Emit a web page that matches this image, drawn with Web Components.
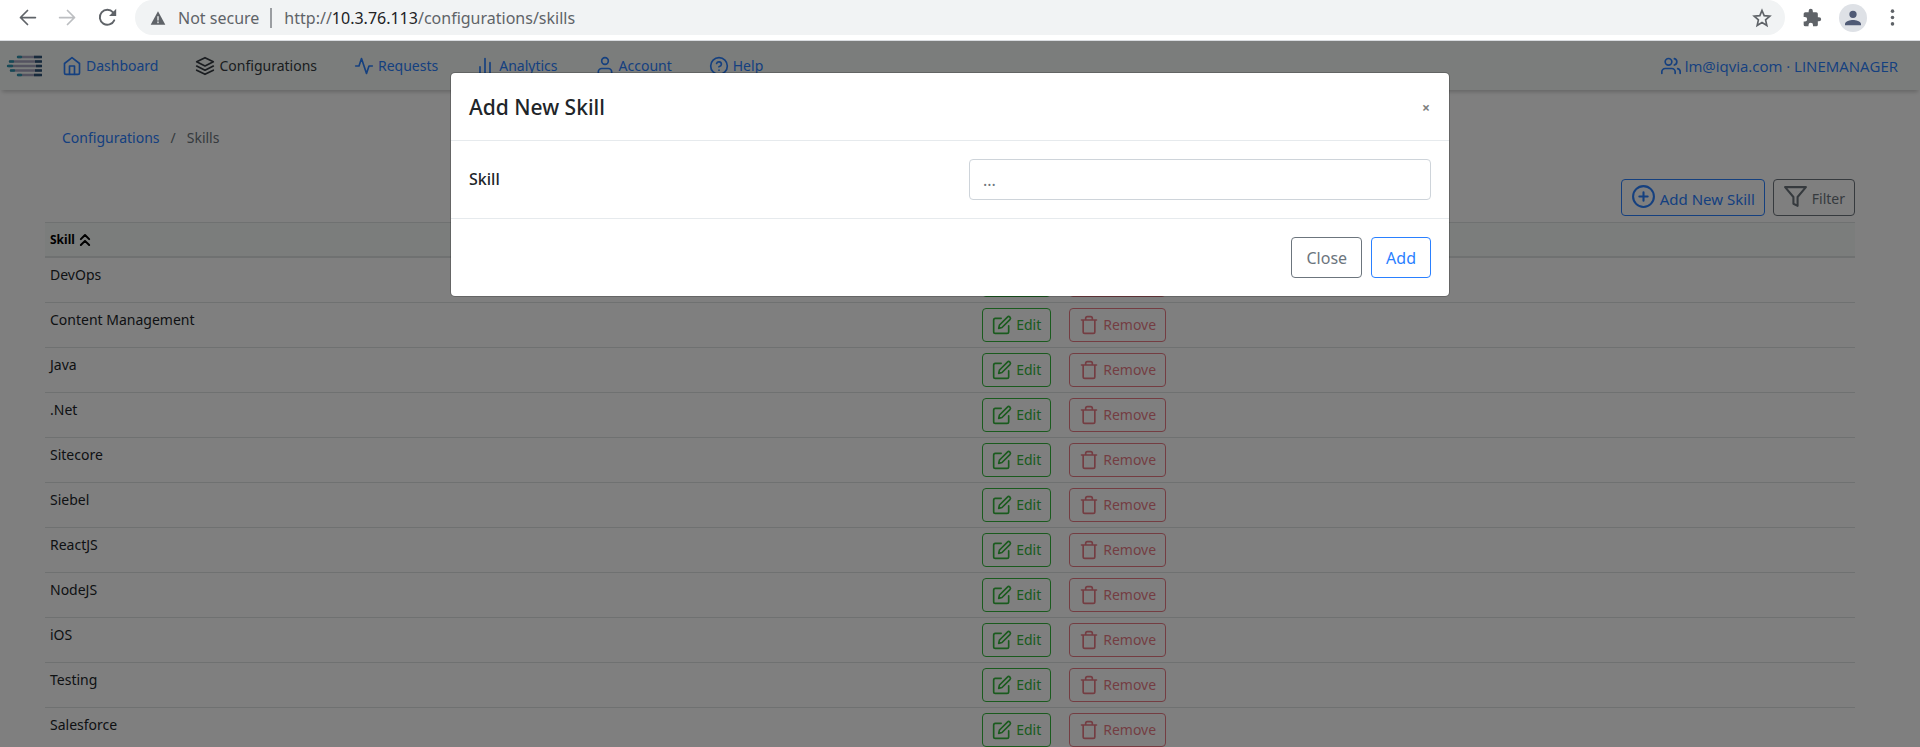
<!DOCTYPE html>
<html lang="en">
<head>
<meta charset="utf-8">
<title>Skills</title>
<style>
  html, body { height: 100%; }
  body {
    margin: 0;
    overflow: hidden;
    color: #212529;
    background: #fff;
    font: 14px/24px "Noto Sans", "Open Sans", sans-serif;
    --blue: #2a80ff;
    --grey: #6c757d;
    --green: #34b63c;
    --red: #dc3545;
    --line: #dee2e2;
    --tint: #f7fbf9;
  }
</style>
</head>
<body>
<skills-window></skills-window>

<script>
const ICONS = {
  home: '<path d="M3 9l9-7 9 7v11a2 2 0 0 1-2 2H5a2 2 0 0 1-2-2z"/><path d="M9 22V12h6v10"/>',
  layers: '<path d="M12 2L2 7l10 5 10-5z"/><path d="M2 17l10 5 10-5M2 12l10 5 10-5"/>',
  activity: '<path d="M22 12h-4l-3 9L9 3l-3 9H2"/>',
  bars: '<path d="M18 20V8M12 20V3M6 20v-7"/>',
  user: '<path d="M20 21v-2a4 4 0 0 0-4-4H8a4 4 0 0 0-4 4v2"/><circle cx="12" cy="6" r="4"/>',
  help: '<circle cx="12" cy="12" r="10"/><path d="M9.1 9a3 3 0 0 1 5.8 1c0 2-3 3-3 3M12 17h.01"/>',
  users: '<path d="M17 21v-2a4 4 0 0 0-4-4H5a4 4 0 0 0-4 4v2"/><circle cx="9" cy="7" r="4"/><path d="M23 21v-2a4 4 0 0 0-3-3.87M16 3.13a4 4 0 0 1 0 7.75"/>',
  plus: '<circle cx="12" cy="12" r="10"/><path d="M12 8v8M8 12h8"/>',
  filter: '<path d="M22 3H2l8 9.46V19l4 2v-8.54z"/>',
  edit: '<path d="M11 4H4a2 2 0 0 0-2 2v14a2 2 0 0 0 2 2h14a2 2 0 0 0 2-2v-7"/><path d="M18.5 2.5a2.12 2.12 0 0 1 3 3L12 15l-4 1 1-4z"/>',
  trash: '<path d="M3 6h18M19 6v14a2 2 0 0 1-2 2H7a2 2 0 0 1-2-2V6m3 0V4a2 2 0 0 1 2-2h4a2 2 0 0 1 2 2v2"/>',
  sort: '<path d="M17 11l-5-5-5 5M17 18l-5-5-5 5" stroke-width="2.4"/>',
  back: '<path d="M21 12H4M12 4l-8 8 8 8"/>',
  forward: '<path d="M3 12h17M12 4l8 8-8 8"/>',
  reload: '<path d="M20.5 15.5A9.5 9.5 0 1 1 19 5.5L21 8" stroke-width="2.4"/><path d="M23 1v9h-9z" fill="currentColor" stroke="none"/>',
  warning: '<path d="M12 2L1 22h22z" fill="currentColor" stroke="none"/><path d="M12 10v5M12 18v1" stroke="#f1f3f4"/>',
  star: '<path d="M12 3l2.6 6.2 6.8.6-5.1 4.5 1.5 6.6-5.8-3.5-5.8 3.5 1.5-6.6-5.1-4.5 6.8-.6z" stroke-linejoin="miter"/>',
  puzzle: '<path fill="currentColor" stroke="none" d="M20.5 11H19V7a2 2 0 0 0-2-2h-4V3.5a2.5 2.5 0 0 0-5 0V5H4a2 2 0 0 0-2 2v3.8h1.5a2.7 2.7 0 0 1 0 5.4H2V20a2 2 0 0 0 2 2h3.8v-1.5a2.7 2.7 0 0 1 5.4 0V22H17a2 2 0 0 0 2-2v-4h1.500a2.500 2.500 0 0 0 0-5z"/>',
  person: '<path fill="currentColor" stroke="none" d="M12 12a5.500 5.500 0 1 0 0-11 5.500 5.500 0 0 0 0 11zM0 23v-2c0-4 8-6 12-6s12 2 12 6v2z"/>',
  dots: '<g fill="currentColor" stroke="none"><circle cx="12" cy="3" r="2.500"/><circle cx="12" cy="12" r="2.500"/><circle cx="12" cy="21" r="2.500"/></g>'
};

class BaseElement extends HTMLElement {
  connectedCallback() {
    if (this.shadowRoot) return;
    this.attachShadow({ mode: 'open' }).innerHTML = this.render();
  }
}

customElements.define('ui-icon', class extends BaseElement {
  render() {
    const size = this.getAttribute('size') || 20;
    return `<style>
      :host { display: block; flex: none; }
      svg { display: block; fill: none; stroke: currentColor; stroke-width: 2; stroke-linecap: round; stroke-linejoin: round; overflow: visible; }
    </style>
    <svg width="${size}" height="${size}" viewBox="0 0 24 24" aria-hidden="true">${ICONS[this.getAttribute('name')]}</svg>`;
  }
});

customElements.define('browser-bar', class extends BaseElement {
  render() {
    return `<style>
      :host { display: flex; align-items: flex-start; height: 40px; border-bottom: 1px solid #d9dce0; background: #fff; color: #5f6368; font-size: 16px; }
      button { display: grid; place-items: center; width: 40px; height: 35px; padding: 0; border: 0; background: none; color: inherit; }
      .history { display: flex; padding: 0 8px 0 7px; }
      button:disabled { color: #bcbec1; }
      .address { flex: 1; display: flex; align-items: center; height: 35px; padding: 0 13px 0 15px; border-radius: 18px; background: #f1f3f4; box-sizing: border-box; }
      .security { padding: 0 11px 0 12px; border-right: 2px solid #9a9da1; line-height: 20px; }
      .url { flex: 1; padding-left: 12px; }
      .url b { font-weight: 400; color: #202124; }
      .address button { width: 20px; }
      .tools { display: flex; padding: 0 16px 0 7px; }
      .tools .profile { width: 42px; }
      .tools .menu { width: 24px; margin-left: 6px; }
      .avatar { display: grid; place-items: center; width: 28px; height: 28px; border-radius: 50%; background: #dee1e6; color: #505b76; }
    </style>
    <div class="history">
      <button aria-label="Back"><ui-icon name="back" size="21"></ui-icon></button>
      <button aria-label="Forward" disabled><ui-icon name="forward" size="21"></ui-icon></button>
      <button aria-label="Reload"><ui-icon name="reload" size="19"></ui-icon></button>
    </div>
    <div class="address">
      <ui-icon name="warning" size="16"></ui-icon>
      <span class="security">Not secure</span>
      <span class="url">http://<b>10.3.76.113</b>/configurations/skills</span>
      <button aria-label="Bookmark"><ui-icon name="star" size="20"></ui-icon></button>
    </div>
    <div class="tools">
      <button aria-label="Extensions"><ui-icon name="puzzle" size="20"></ui-icon></button>
      <button class="profile" aria-label="Profile"><span class="avatar"><ui-icon name="person" size="16"></ui-icon></span></button>
      <button class="menu" aria-label="Menu"><ui-icon name="dots" size="17"></ui-icon></button>
    </div>`;
  }
});

customElements.define('nav-link', class extends BaseElement {
  render() {
    return `<style>
      :host { display: block; }
      a { display: flex; align-items: center; gap: 4px; color: var(--blue); text-decoration: none; white-space: nowrap; }
      :host([active]) a { color: #343a40; }
    </style>
    <a href="#"><ui-icon name="${this.getAttribute('icon')}"></ui-icon><slot></slot></a>`;
  }
});

customElements.define('nav-bar', class extends BaseElement {
  render() {
    return `<style>
      :host { display: flex; align-items: center; height: 49px; padding: 0 22px 0 6px; background: var(--tint); box-shadow: 0 4px 4px -2px rgba(0,0,0,.2); }
      .brand { display: block; width: 36px; margin-right: 20px; }
      .brand svg { display: block; fill: none; stroke-width: 2.4; stroke-linecap: round; }
      nav { flex: 1; display: flex; gap: 37px; }
      .me { font-size: 15px; font-family: "Open Sans", "Noto Sans", sans-serif; }
    </style>
    <a class="brand" href="#" aria-label="Home">
      <svg width="36" height="22" viewBox="0 0 36 22">
        <path stroke="#a9a6c0" d="M12 2h22M4 6.5h30M3 11h31M5 15.5h29M12 20h22"/>
        <path stroke="#2f93ad" d="M12 2h3M4 6.5h3M2 11h4M5 15.5h3M12 20h3"/>
        <path stroke="#2f5578" stroke-linecap="butt" d="M28 2h8M29 6.5h7M30 11h6M29 15.5h7M28 20h8"/>
      </svg>
    </a>
    <nav>
      <nav-link icon="home">Dashboard</nav-link>
      <nav-link icon="layers" active>Configurations</nav-link>
      <nav-link icon="activity">Requests</nav-link>
      <nav-link icon="bars">Analytics</nav-link>
      <nav-link icon="user">Account</nav-link>
      <nav-link icon="help">Help</nav-link>
    </nav>
    <nav-link class="me" icon="users">lm@iqvia.com · LINEMANAGER</nav-link>`;
  }
});

customElements.define('bread-crumb', class extends BaseElement {
  render() {
    return `<style>
      :host { display: flex; gap: 11px; color: #6c757d; }
      a { color: var(--blue); text-decoration: none; }
    </style>
    <a href="#">Configurations</a><span>/</span><span>Skills</span>`;
  }
});

customElements.define('ui-button', class extends BaseElement {
  render() {
    const icon = this.getAttribute('icon');
    const large = this.getAttribute('size') === 'tool';
    return `<style>
      :host { display: block; color: var(--grey); }
      :host([tone=blue]) { color: var(--blue); }
      :host([tone=green]) { color: var(--green); }
      :host([tone=red]) { color: var(--red); }
      button { display: flex; align-items: center; gap: 4px; height: 34px; padding: 0 9px; border: 1px solid; border-radius: 4px; background: none; color: inherit; font: inherit; white-space: nowrap; }
      button:disabled { opacity: .65; }
      :host([size=tool]) button { align-items: flex-start; height: 37px; padding-top: 4px; }
      :host([size=tool]) span { padding-top: 3px; }
      :host([size=dialog]) button { height: 41px; padding: 0 14px; font-size: 16px; }
    </style>
    <button type="button" ${this.hasAttribute('disabled') ? 'disabled' : ''}>${icon ? `<ui-icon name="${icon}" size="${large ? 25 : 20}"></ui-icon>` : ''}<span><slot></slot></span></button>`;
  }
});

customElements.define('skills-table', class extends BaseElement {
  render() {
    const skills = ['DevOps', 'Content Management', 'Java', '.Net', 'Sitecore', 'Siebel', 'ReactJS', 'NodeJS', 'iOS', 'Testing', 'Salesforce'];
    return `<style>
      :host { display: block; }
      table { width: 100%; table-layout: fixed; border-collapse: separate; border-spacing: 0; }
      .name { width: 51.5%; }
      th, td { box-sizing: border-box; text-align: left; vertical-align: top; padding: 5px 5px 4px; border-bottom: 1px solid var(--line); }
      th { height: 36px; border-top: 1px solid var(--line); border-bottom-width: 2px; background: var(--tint); color: #000; font-size: 12px; }
      td { height: 45px; }
      .sort { display: flex; align-items: center; }
      .actions { display: flex; gap: 18px; }
    </style>
    <table>
      <colgroup><col class="name"><col></colgroup>
      <thead><tr><th><span class="sort">Skill<ui-icon name="sort"></ui-icon></span></th><th></th></tr></thead>
      <tbody>${skills.map(s => `<tr><td>${s}</td><td><div class="actions">
        <ui-button tone="green" icon="edit">Edit</ui-button>
        <ui-button tone="red" icon="trash" disabled>Remove</ui-button></div></td></tr>`).join('')}</tbody>
    </table>`;
  }
});

customElements.define('skill-dialog', class extends BaseElement {
  render() {
    return `<style>
      :host { display: block; width: 1000px; max-width: 100%; box-sizing: border-box; border: 1px solid rgba(0,0,0,.2); border-radius: 5px; background: #fff; background-clip: padding-box; }
      header, .body, footer { display: flex; align-items: center; padding: 18px; }
      header, .body { border-bottom: 1px solid #e6eaed; }
      header { justify-content: space-between; padding: 19px 18px 17px; }
      h5 { margin: 0; font-size: 21px; line-height: 31px; font-weight: 500; }
      .close { padding: 0 1px; border: 0; background: none; color: #7f7f7f; font: 700 14px/24px "Noto Sans", sans-serif; }
      .body { display: grid; grid-template-columns: 1fr 1fr; gap: 38px; }
      label { padding-bottom: 2px; font-size: 16px; font-weight: 500; }
      input { width: 100%; height: 41px; box-sizing: border-box; padding: 0 13px; border: 1px solid #ced4da; border-radius: 4px; background: #fff; color: inherit; font: 16px/24px "Noto Sans", sans-serif; }
      input::placeholder { color: #6c757d; opacity: 1; }
      footer { justify-content: flex-end; gap: 9px; }
    </style>
    <header><h5>Add New Skill</h5><button class="close" type="button" aria-label="Close">×</button></header>
    <div class="body"><label for="skill">Skill</label><input id="skill" type="text" placeholder="..."></div>
    <footer><ui-button size="dialog">Close</ui-button><ui-button size="dialog" tone="blue">Add</ui-button></footer>`;
  }
});

customElements.define('skills-window', class extends BaseElement {
  render() {
    return `<style>
      :host { display: flex; flex-direction: column; height: 100%; }
      .page { flex: 1; min-height: 0; position: relative; overflow: hidden; }
      bread-crumb { padding: 36px 62px 0; }
      main { padding: 29px 65px 0 45px; }
      .tools { display: flex; justify-content: flex-end; gap: 8px; padding-bottom: 6px; }
      .tools .add { font-size: 15px; }
      .backdrop { position: absolute; inset: 0; display: flex; justify-content: center; align-items: flex-start; padding: 31px 20px 0 0; background: rgba(0,0,0,.5); }
    </style>
    <browser-bar></browser-bar>
    <div class="page">
      <nav-bar></nav-bar>
      <bread-crumb></bread-crumb>
      <main>
        <div class="tools">
          <ui-button class="add" tone="blue" size="tool" icon="plus">Add New Skill</ui-button>
          <ui-button size="tool" icon="filter">Filter</ui-button>
        </div>
        <skills-table></skills-table>
      </main>
      <div class="backdrop"><skill-dialog role="dialog" aria-label="Add New Skill"></skill-dialog></div>
    </div>`;
  }
});
</script>
</body>
</html>
